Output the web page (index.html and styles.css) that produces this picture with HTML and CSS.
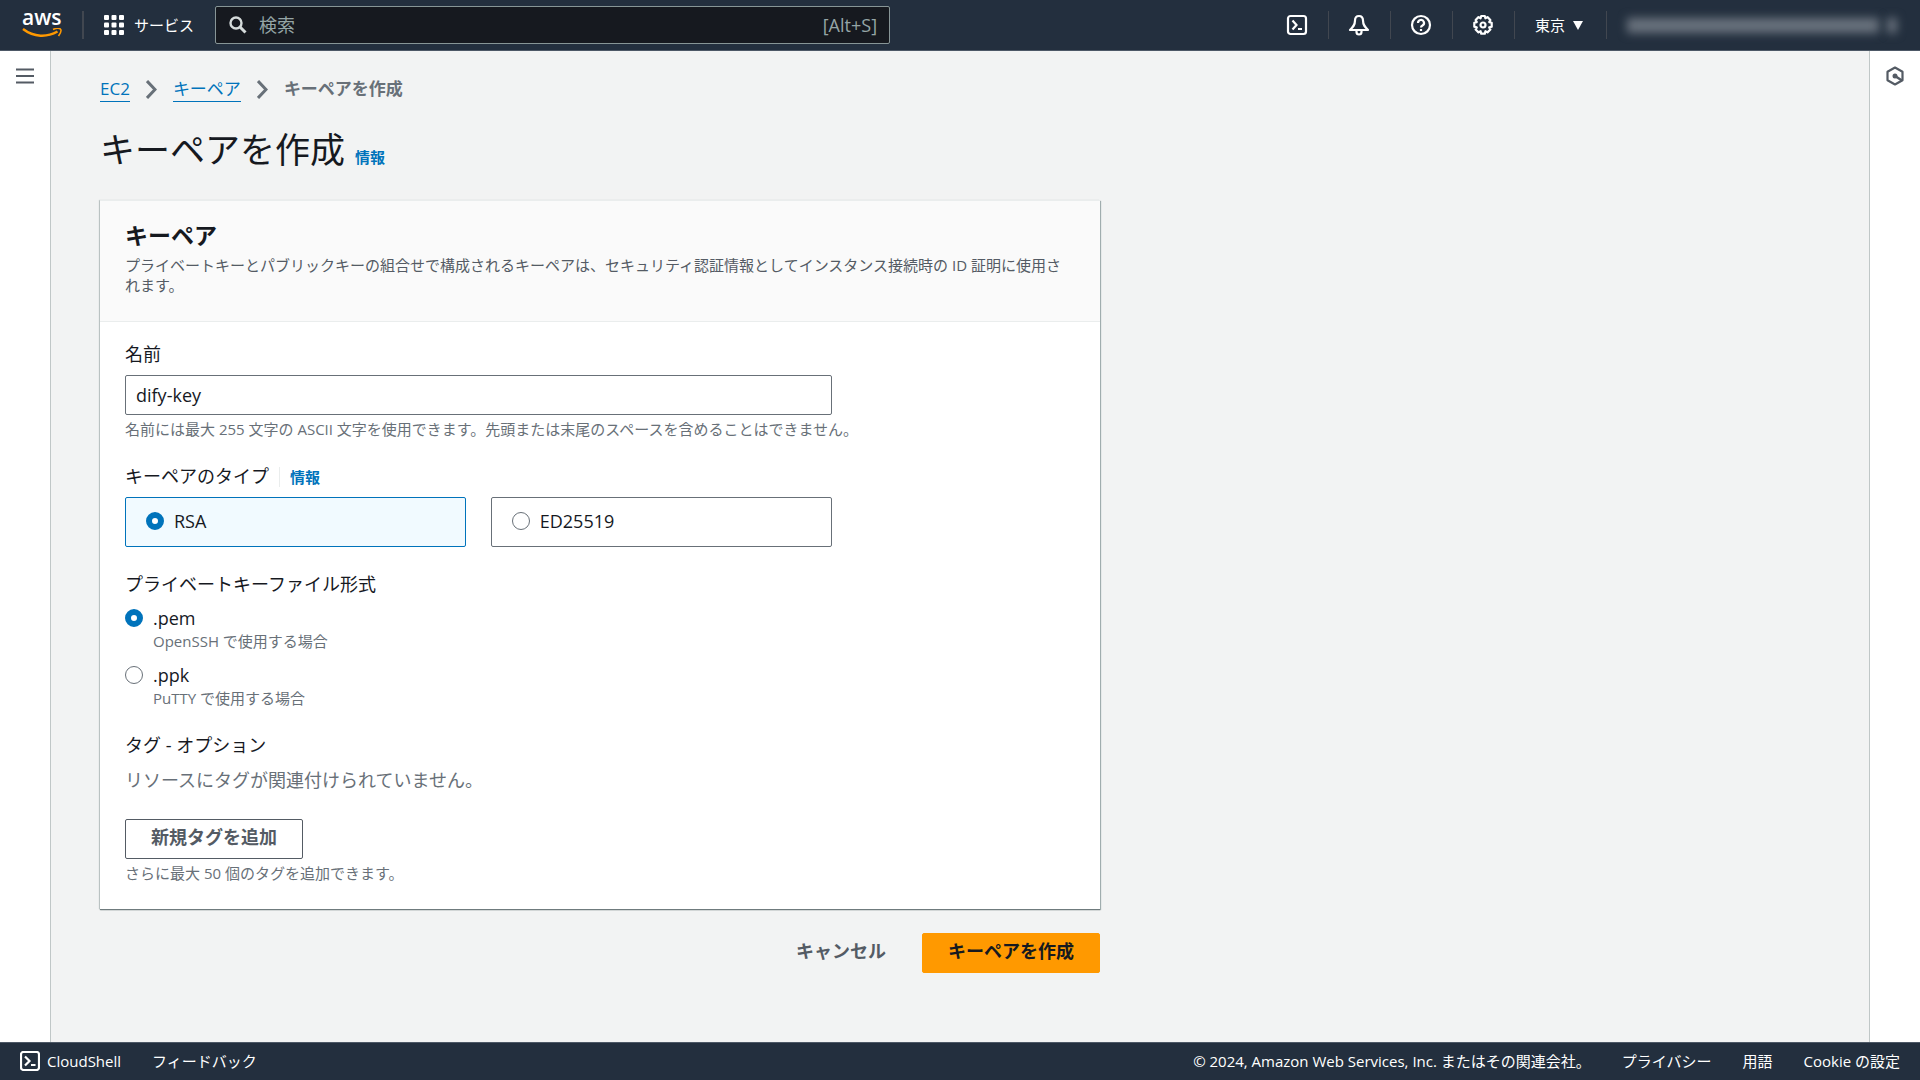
FILE: index.html
```html
<!DOCTYPE html>
<html lang="ja">
<head>
  <meta charset="UTF-8" />
  <meta name="viewport" content="width=device-width, initial-scale=1.0"/>
  <title>キーペアを作成 | EC2</title>
  <link rel="stylesheet" href="styles.css">
</head>
<body>
  <header class="topbar">
    <a class="logo" href="#" aria-label="aws">
      <span>aws</span>
      <svg width="40" height="10" viewBox="0 0 40 10" aria-hidden="true">
        <path d="M1 1C12 9.500 25 9.500 35.500 3.500" fill="none" stroke="#f90" stroke-width="2.400"/>
        <path d="M31 1.500C34 .300 37.500 .200 38.500 1.200S38.300 5.500 36.500 8" fill="none" stroke="#f90" stroke-width="1.600"/>
      </svg>
    </a>
    <button class="services" type="button">
      <svg width="20" height="20" viewBox="0 0 20 20" fill="#fff" aria-hidden="true">
        <rect width="5" height="5" rx="1"/><rect x="7.500" width="5" height="5" rx="1"/><rect x="15" width="5" height="5" rx="1"/>
        <rect y="7.500" width="5" height="5" rx="1"/><rect x="7.500" y="7.500" width="5" height="5" rx="1"/><rect x="15" y="7.500" width="5" height="5" rx="1"/>
        <rect y="15" width="5" height="5" rx="1"/><rect x="7.500" y="15" width="5" height="5" rx="1"/><rect x="15" y="15" width="5" height="5" rx="1"/>
      </svg>
      サービス
    </button>
    <label class="search">
      <svg width="18" height="18" viewBox="0 0 18 18" fill="none" stroke="#d5dbdb" aria-hidden="true">
        <circle cx="7" cy="7" r="5.500" stroke-width="2.400"/>
        <path d="M11 11l5.500 5.500" stroke-width="3"/>
      </svg>
      <input type="search" placeholder="検索" aria-label="検索">
      <span>[Alt+S]</span>
    </label>
    <nav class="tools">
      <button type="button" aria-label="CloudShell">
        <svg width="22" height="22" viewBox="0 0 22 22" fill="none" stroke="#fff" stroke-width="2.200" aria-hidden="true">
          <rect x="2" y="2" width="18" height="18" rx="2.500"/>
          <path d="M6.500 6.500l4 4.500-4 4.500M12 15h4"/>
        </svg>
      </button>
      <button type="button" aria-label="通知">
        <svg width="22" height="22" viewBox="0 0 22 22" fill="none" stroke="#fff" stroke-width="2.200" stroke-linejoin="round" aria-hidden="true">
          <path d="M11 2C8.500 2 7 4 7 6.500C7 11 5 13 2 16H20C17 13 15 11 15 6.500C15 4 13.500 2 11 2Z"/>
          <path d="M8.500 16v2a2.500 2.500 0 0 0 5 0v-2"/>
        </svg>
      </button>
      <button type="button" aria-label="ヘルプ">
        <svg width="22" height="22" viewBox="0 0 22 22" fill="none" stroke="#fff" stroke-width="2.200" aria-hidden="true">
          <circle cx="11" cy="11" r="9"/>
          <path d="M8 9a3 3 0 1 1 4.500 2.500C11.500 12.100 11 12.500 11 13.500"/>
          <path d="M11 15v2"/>
        </svg>
      </button>
      <button type="button" aria-label="設定">
        <svg width="22" height="22" viewBox="0 0 22 22" fill="none" stroke="#fff" stroke-width="2.200" stroke-linejoin="round" aria-hidden="true">
          <path d="M9.200 2h3.600l.600 2.300 2.100-1.200 2.900 2.900-1.200 2.100 2.500.600v4l-2.500.700 1.200 2.100-2.900 2.900-2.100-1.200-.600 2.500H9.200l-.600-2.500-2.100 1.200-2.900-2.900 1.200-2.100-2.500-.700v-4l2.500-.600-1.200-2.100 2.900-2.900 2.100 1.200z"/>
          <circle cx="11" cy="11" r="2.500"/>
        </svg>
      </button>
      <button type="button" class="region">東京
        <svg width="10" height="9" viewBox="0 0 10 9" aria-hidden="true"><path d="M0 0h10L5 9z" fill="#fff"/></svg>
      </button>
      <button type="button" class="account" aria-label="アカウント"><i class="masked"></i><i class="masked caret"></i></button>
    </nav>
  </header>

  <div class="layout">
    <aside class="side left">
      <button type="button" aria-label="メニュー">
        <svg width="18" height="16" viewBox="0 0 18 16" stroke="#545b64" stroke-width="2.200" aria-hidden="true"><path d="M0 1.500h18M0 8h18M0 14.500h18"/></svg>
      </button>
    </aside>

    <main class="content">
      <nav class="breadcrumb">
        <a href="#">EC2</a>
        <svg width="11" height="19" viewBox="0 0 11 19" aria-hidden="true"><path d="M1 1l8 8.500-8 8.500"/></svg>
        <a href="#">キーペア</a>
        <svg width="11" height="19" viewBox="0 0 11 19" aria-hidden="true"><path d="M1 1l8 8.500-8 8.500"/></svg>
        <strong>キーペアを作成</strong>
      </nav>
      <div class="title">
        <h1>キーペアを作成</h1>
        <a class="info" href="#">情報</a>
      </div>

      <form class="form">
        <section class="card">
          <div class="card-header">
            <h2>キーペア</h2>
            <p>プライベートキーとパブリックキーの組合せで構成されるキーペアは、セキュリティ認証情報としてインスタンス接続時の ID 証明に使用されます。</p>
          </div>
          <div class="card-body">
            <div class="field">
              <label class="name" for="keyName">名前</label>
              <input class="text narrow" type="text" id="keyName" value="dify-key">
              <p class="hint">名前には最大 255 文字の ASCII 文字を使用できます。先頭または末尾のスペースを含めることはできません。</p>
            </div>

            <div class="field" role="radiogroup" aria-labelledby="typeLabel">
              <div class="name-row">
                <span class="name" id="typeLabel">キーペアのタイプ</span>
                <a class="info" href="#">情報</a>
              </div>
              <div class="tiles narrow">
                <label class="tile"><input type="radio" name="type" checked>RSA</label>
                <label class="tile"><input type="radio" name="type">ED25519</label>
              </div>
            </div>

            <div class="field" role="radiogroup" aria-labelledby="formatLabel">
              <span class="name" id="formatLabel">プライベートキーファイル形式</span>
              <div class="options">
                <label class="option"><input type="radio" name="format" checked>.pem<small>OpenSSH で使用する場合</small></label>
                <label class="option"><input type="radio" name="format">.ppk<small>PuTTY で使用する場合</small></label>
              </div>
            </div>

            <div class="field">
              <span class="name">タグ - オプション</span>
              <p class="empty">リソースにタグが関連付けられていません。</p>
              <button class="btn" type="button">新規タグを追加</button>
              <p class="hint">さらに最大 50 個のタグを追加できます。</p>
            </div>
          </div>
        </section>

        <div class="actions">
          <button class="btn link" type="button">キャンセル</button>
          <button class="btn primary" type="submit">キーペアを作成</button>
        </div>
      </form>
    </main>

    <aside class="side right">
      <button type="button" aria-label="ヘルプパネル">
        <svg width="20" height="20" viewBox="0 0 20 20" fill="none" stroke="#545b64" stroke-width="2.200" stroke-linejoin="round" aria-hidden="true">
          <path d="M10 1.500l7.500 4.200v8.600L10 18.500l-7.500-4.200V5.700z"/>
          <path d="M10 10l7 4.500" stroke-width="2.500"/>
          <circle cx="10" cy="10" r="2.500" fill="#545b64" stroke="none"/>
        </svg>
      </button>
    </aside>
  </div>

  <footer class="footer">
    <a class="shell" href="#">
      <svg width="20" height="20" viewBox="0 0 20 20" fill="none" stroke="#fff" stroke-width="2.200" aria-hidden="true">
        <rect x="1" y="1" width="18" height="18" rx="2.500"/>
        <path d="M5 5.500l4.500 4.500L5 14.500M11 14h4.500"/>
      </svg>
      CloudShell
    </a>
    <a href="#">フィードバック</a>
    <span class="copyright">© 2024, Amazon Web Services, Inc. またはその関連会社。</span>
    <a href="#">プライバシー</a>
    <a href="#">用語</a>
    <a href="#">Cookie の設定</a>
  </footer>
</body>
</html>
```
FILE: styles.css
```css
* {
  box-sizing: border-box;
}

body {
  margin: 0;
  min-height: 100vh;
  display: flex;
  flex-direction: column;
  background: #f2f3f3;
  color: #16191f;
  font-family: "Open Sans", "Noto Sans CJK JP", sans-serif;
  font-size: 18px;
  line-height: 28px;
}

h1, h2, p {
  margin: 0;
}

button, input {
  font: inherit;
  color: inherit;
}

button {
  padding: 0;
  border: 0;
  background: none;
  cursor: pointer;
}

svg {
  display: block;
  flex: none;
}

a {
  color: #0073bb;
  text-decoration: none;
}

/* Top bar */
.topbar {
  display: flex;
  align-items: center;
  height: 51px;
  background: #232f3e;
  border-bottom: 1px solid #4d5866;
  color: #fff;
  font-size: 15px;
}

.logo {
  width: 84px;
  height: 28px;
  padding-left: 22px;
  border-right: 2px solid #414750;
  color: #fff;
}

.logo span {
  display: block;
  height: 17px;
  font-size: 21px;
  font-weight: 600;
  line-height: 13px;
}

.services {
  display: flex;
  align-items: center;
  gap: 10px;
  padding: 0 21px 0 20px;
}

.search {
  display: flex;
  align-items: center;
  flex: 0 1 675px;
  height: 38px;
  padding: 0 12px 0 13px;
  background: #16191f;
  border: 1px solid #879596;
  border-radius: 2px;
  color: #95a5a6;
  font-size: 18px;
}

.search input {
  flex: 1;
  min-width: 0;
  padding: 0 12px;
  border: 0;
  outline: none;
  background: transparent;
}

.search input::placeholder {
  color: #95a5a6;
}

.tools {
  display: flex;
  margin-left: auto;
}

.tools button {
  display: flex;
  align-items: center;
  height: 28px;
  padding: 0 20px 0 19px;
  border-right: 1px solid #414750;
}

.tools .region {
  gap: 8px;
  padding: 0 23px 0 20px;
}

.tools .account {
  gap: 8px;
  padding: 0 23px 0 20px;
  border-right: 0;
}

/* account name is hidden */
.masked {
  width: 252px;
  height: 15px;
  background: #69727d;
  filter: blur(5px);
}

.masked.caret {
  width: 10px;
}

/* Page */
.layout {
  flex: 1;
  display: flex;
}

.side {
  flex: none;
  width: 51px;
  padding-top: 15px;
  background: #fff;
}

.side button {
  display: flex;
  justify-content: center;
  width: 100%;
}

.left {
  padding-top: 17px;
  border-right: 1px solid #c0c7c7;
}

.right {
  border-left: 1px solid #c0c7c7;
}

.content {
  flex: 1;
  padding: 23px 49px 40px;
}

.breadcrumb {
  display: flex;
  align-items: center;
  gap: 16px;
  height: 30px;
  font-size: 17px;
}

.breadcrumb a {
  line-height: 24px;
  border-bottom: 1px solid #0073bb;
}

.breadcrumb svg {
  fill: none;
  stroke: #687078;
  stroke-width: 3;
}

.breadcrumb strong {
  color: #687078;
  line-height: 26px;
}

.title {
  display: flex;
  align-items: baseline;
  gap: 10px;
  margin: 20px 0 25px;
}

.title h1 {
  font-size: 35px;
  font-weight: 400;
  line-height: 51px;
}

.info {
  font-size: 15px;
  font-weight: 600;
  line-height: 20px;
}

.form {
  max-width: 1000px;
}

.card {
  background: #fff;
  border-top: 1px solid #eaeded;
  box-shadow: 0 1px 1px #6f7b7d, 1px 1px 1px #aab7b8, -1px 0 1px #c9d0d0;
}

.card-header {
  padding: 19px 25px 26px;
  background: #fafafa;
  border-bottom: 1px solid #eaeded;
}

.card-header h2 {
  margin-bottom: 5px;
  font-size: 23px;
  line-height: 30px;
}

.card-header p {
  color: #545b64;
  font-size: 15px;
  line-height: 20px;
}

.card-body {
  display: flex;
  flex-direction: column;
  gap: 23px;
  padding: 18px 25px 26px;
}

.narrow {
  width: calc(75% - 6px);
}

.name {
  display: block;
  margin-bottom: 7px;
  line-height: 28px;
}

.name-row {
  display: flex;
  align-items: baseline;
  gap: 10px;
}

.name-row .info {
  padding-left: 10px;
  border-left: 1px solid #eaeded;
}

.text {
  display: block;
  height: 40px;
  padding: 0 10px;
  border: 1px solid #687078;
  border-radius: 2px;
  background: #fff;
}

.hint {
  margin-top: 4px;
  color: #687078;
  font-size: 15px;
  line-height: 20px;
}

.tiles {
  display: grid;
  grid-template-columns: 1fr 1fr;
  gap: 25px;
}

.tile {
  display: flex;
  align-items: center;
  gap: 10px;
  height: 50px;
  padding: 0 20px 2px;
  border: 1px solid #687078;
  border-radius: 2px;
}

.tile:has(:checked) {
  background: #f1faff;
  border-color: #0073bb;
}

input[type="radio"] {
  appearance: none;
  width: 18px;
  height: 18px;
  margin: 0;
  border: 1px solid #687078;
  border-radius: 50%;
  background: #fff;
}

input[type="radio"]:checked {
  border: 6px solid #0073bb;
}

.options {
  display: grid;
  gap: 11px;
}

.option {
  display: grid;
  grid-template-columns: 18px 1fr;
  column-gap: 10px;
  align-items: center;
  line-height: 26px;
}

.option small {
  grid-column: 2;
  color: #687078;
  font-size: 15px;
  line-height: 20px;
}

.empty {
  margin-bottom: 25px;
  color: #687078;
}

.btn {
  height: 40px;
  padding: 0 25px 4px;
  border: 1px solid #545b64;
  border-radius: 2px;
  color: #545b64;
  font-weight: bold;
}

.actions {
  display: flex;
  justify-content: flex-end;
  gap: 10px;
  padding-top: 24px;
}

.link {
  border-color: transparent;
}

.primary {
  background: #f90;
  border-color: #f90;
  color: #16191f;
}

/* Footer */
.footer {
  display: flex;
  align-items: center;
  gap: 31px;
  height: 38px;
  padding: 0 20px 1px;
  background: #232f3e;
  border-top: 1px solid #4d5866;
  color: #fff;
  font-size: 15px;
  line-height: 20px;
}

.footer a {
  color: #fff;
}

.shell {
  display: flex;
  align-items: center;
  gap: 7px;
}

.copyright {
  margin-left: auto;
}
```
